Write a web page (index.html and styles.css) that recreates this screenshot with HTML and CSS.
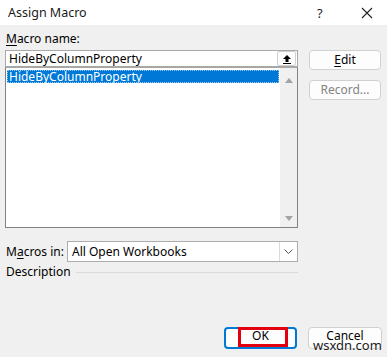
FILE: index.html
```html
<!DOCTYPE html>
<html lang="en">
<head>
    <title>Assign Macro</title>
    <link rel="stylesheet" href="styles.css">
</head>
<body>
    <div class="dialog">
        <div class="titlebar">
            <span class="title">Assign Macro</span>
            <span class="help">?</span>
            <span class="close">
                <svg width="12" height="12" viewBox="0 0 12 12"><path d="M1 1L11 11M11 1L1 11" stroke="#222" stroke-width="1.1" fill="none"/></svg>
            </span>
        </div>
        <div class="body">
            <div class="columns">
                <div class="main">
                    <div class="label-row"><span><u>M</u>acro name:</span></div>
                    <div class="name-input">
                        <span>HideByColumnProperty</span>
                        <span class="up-btn">
                            <svg width="10" height="10" viewBox="0 0 10 10"><path d="M5 1L1 5H3.5V8H6.5V5H9Z" fill="#000"/><rect x="1" y="9" width="8" height="1.2" fill="#000"/></svg>
                        </span>
                    </div>
                    <div class="macro-list">
                        <div class="items">
                            <div class="item selected">HideByColumnProperty</div>
                        </div>
                        <div class="scrollbar">
                            <span class="arrow up"></span>
                            <span class="arrow down"></span>
                        </div>
                    </div>
                    <div class="macros-in">
                        <span class="macros-label">M<u>a</u>cros in:</span>
                        <div class="dropdown">
                            <span>All Open Workbooks</span>
                            <span class="drop-btn">
                                <svg width="9" height="5" viewBox="0 0 9 5"><path d="M0.5 0.5L4.5 4.5L8.5 0.5" stroke="#555" fill="none"/></svg>
                            </span>
                        </div>
                    </div>
                    <div class="description">
                        <span>Description</span>
                        <span class="rule"></span>
                    </div>
                </div>
                <div class="side">
                    <button class="btn"><u>E</u>dit</button>
                    <button class="btn disabled">Record...</button>
                </div>
            </div>
            <div class="footer">
                <button class="btn default">OK<span class="highlight"></span></button>
                <button class="btn cancel">Cancel</button>
            </div>
        </div>
        <span class="watermark">wsxdn.com</span>
    </div>
</body>
</html>
```

FILE: styles.css
```css
body {
    margin: 0;
    font-family: "Noto Sans", "Open Sans", sans-serif;
    font-size: 12px;
    color: #000;
    background: #f0f0f0;
}
u {
    text-decoration-thickness: 1px;
    text-underline-offset: 2px;
}
.dialog {
    position: relative;
    width: 387px;
    height: 357px;
    display: flex;
    flex-direction: column;
    background: #f0f0f0;
}
.titlebar {
    height: 25px;
    background: #ffffff;
    display: flex;
    align-items: center;
    flex-shrink: 0;
}
.title {
    padding-left: 8px;
    flex: 1;
    font-size: 12.5px;
    color: #1a1a1a;
}
.help {
    width: 12px;
    margin-right: 32px;
    font-size: 13px;
    color: #222;
}
.close {
    width: 12px;
    height: 12px;
    margin-right: 14px;
    display: flex;
}
.body {
    flex: 1;
    display: flex;
    flex-direction: column;
    padding: 0 5px 8px 5px;
}
.columns {
    display: flex;
}
.main {
    width: 293px;
}
.label-row {
    height: 25px;
    padding: 7px 0 0 1px;
    box-sizing: border-box;
    line-height: 14px;
}
.name-input {
    height: 17px;
    box-sizing: border-box;
    border: 1px solid #a8a8a8;
    background: #ffffff;
    display: flex;
    align-items: center;
    padding-left: 3px;
    line-height: 14px;
}
.name-input span:first-child {
    flex: 1;
}
.up-btn {
    width: 17px;
    height: 13px;
    margin-right: 1px;
    border: 1px solid #cfcfcf;
    border-radius: 2px;
    background: #fdfdfd;
    display: flex;
    align-items: center;
    justify-content: center;
}
.macro-list {
    height: 161px;
    box-sizing: border-box;
    border: 1px solid #828282;
    border-top-color: #a8a8a8;
    background: #ffffff;
    display: flex;
}
.items {
    flex: 1;
    padding: 2px 1px 0 1px;
}
.item {
    height: 13px;
    line-height: 13px;
    padding-left: 2px;
}
.item.selected {
    background: #0078d7;
    color: #ffffff;
    outline: 1px dotted #9ecbf0;
    outline-offset: -1px;
}
.scrollbar {
    width: 17px;
    background: #f0f0f0;
    display: flex;
    flex-direction: column;
    align-items: center;
    justify-content: space-between;
    padding: 10px 0 6px 0;
}
.arrow {
    width: 0;
    height: 0;
    border-left: 4px solid transparent;
    border-right: 4px solid transparent;
}
.arrow.up {
    border-bottom: 5px solid #a3a3a3;
}
.arrow.down {
    border-top: 5px solid #a3a3a3;
}
.macros-in {
    margin-top: 13px;
    display: flex;
    align-items: center;
}
.macros-label {
    width: 62px;
    padding-left: 1px;
    box-sizing: border-box;
}
.dropdown {
    flex: 1;
    height: 21px;
    box-sizing: border-box;
    border: 1px solid #adadad;
    background: #ffffff;
    display: flex;
    align-items: center;
    padding-left: 4px;
}
.dropdown span:first-child {
    flex: 1;
}
.drop-btn {
    width: 17px;
    height: 19px;
    border-left: 1px solid #dadada;
    display: flex;
    align-items: center;
    justify-content: center;
}
.description {
    margin-top: 3px;
    display: flex;
    align-items: center;
    padding-left: 1px;
    line-height: 14px;
}
.rule {
    flex: 1;
    height: 1px;
    margin-left: 5px;
    background: #dadada;
}
.side {
    margin-left: 11px;
    padding-top: 25px;
    width: 72px;
    display: flex;
    flex-direction: column;
    gap: 10px;
}
.btn {
    position: relative;
    height: 20px;
    box-sizing: border-box;
    border: 1px solid #d0d0d0;
    border-radius: 4px;
    background: #fdfdfd;
    font-family: inherit;
    font-size: 12px;
    color: #000;
    padding: 0;
    line-height: 16px;
}
.btn.disabled {
    color: #838383;
}
.footer {
    margin-top: auto;
    display: flex;
    justify-content: flex-end;
    gap: 11px;
}
.footer .btn {
    height: 22px;
    width: 74px;
    line-height: 14px;
    padding-bottom: 4px;
}
.btn.default {
    width: 73px;
    border: 2px solid #0078d4;
}
.highlight {
    position: absolute;
    left: 12px;
    top: -2px;
    width: 50px;
    height: 20px;
    box-sizing: border-box;
    border: 3px solid #e3000f;
}
.watermark {
    position: absolute;
    left: 313px;
    top: 338px;
    font-size: 13px;
    line-height: 15px;
    color: #1a1a1a;
    text-shadow: 0 0 2px #fff, 0 0 2px #fff;
}
```
